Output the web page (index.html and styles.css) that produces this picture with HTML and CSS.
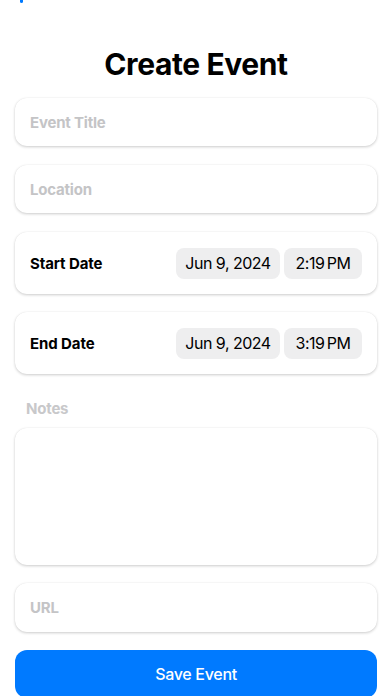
FILE: index.html
```html
<!DOCTYPE html>
<html lang="en">
<head>
<meta charset="utf-8">
<meta name="viewport" content="width=device-width, initial-scale=1">
<title>Create Event</title>
<link rel="stylesheet" href="styles.css">
</head>
<body>
<div class="navbar"><span class="back-tail"></span></div>
<main class="form">
  <h1 class="title">Create Event</h1>
  <div class="field field-first"><span class="placeholder">Event Title</span></div>
  <div class="field"><span class="placeholder">Location</span></div>
  <div class="date-row date-first">
    <span class="date-label">Start Date</span>
    <div class="pills">
      <span class="pill pill-date">Jun 9, 2024</span>
      <span class="pill pill-time">2:19&#8201;PM</span>
    </div>
  </div>
  <div class="date-row">
    <span class="date-label">End Date</span>
    <div class="pills">
      <span class="pill pill-date">Jun 9, 2024</span>
      <span class="pill pill-time">3:19&#8201;PM</span>
    </div>
  </div>
  <div class="notes-label">Notes</div>
  <div class="notes"></div>
  <div class="field field-url"><span class="placeholder">URL</span></div>
  <button class="save">Save Event</button>
</main>
</body>
</html>
```
FILE: styles.css
```css
* { box-sizing: border-box; }
html, body {
  margin: 0;
  padding: 0;
  background: #ffffff;
  font-family: Inter, "Noto Sans", "Liberation Sans", sans-serif;
  color: #000;
  overflow: hidden;
}
.navbar {
  height: 0;
  position: relative;
}
.back-tail {
  position: absolute;
  left: 20px;
  top: 0;
  width: 3px;
  height: 3px;
  background: #007aff;
  border-radius: 0 0 2px 2px;
}
.form {
  display: flex;
  flex-direction: column;
  padding: 0 15px;
}
.title {
  margin: 46px 0 0;
  height: 36px;
  line-height: 36px;
  font-size: 30px;
  font-weight: 700;
  letter-spacing: -0.4px;
  text-align: center;
}
.field {
  height: 48px;
  margin-top: 19px;
  background: #fff;
  border-radius: 12px;
  box-shadow: 0 1px 3px rgba(0,0,0,0.2), 0 0 1px rgba(0,0,0,0.08);
  display: flex;
  align-items: center;
  padding: 0 15px;
}
.field-first { margin-top: 16px; }
.placeholder {
  font-size: 15px;
  font-weight: 700;
  letter-spacing: -0.2px;
  color: #c4c4c6;
}
.date-row {
  height: 62px;
  margin-top: 19px;
  background: #fff;
  border-radius: 12px;
  box-shadow: 0 1px 3px rgba(0,0,0,0.2), 0 0 1px rgba(0,0,0,0.08);
  display: flex;
  align-items: center;
  justify-content: space-between;
  padding: 0 15px;
}
.date-row + .date-row { margin-top: 18px; }
.date-label {
  font-size: 15px;
  font-weight: 700;
  letter-spacing: -0.1px;
}
.pills {
  display: flex;
  gap: 4px;
}
.pill {
  height: 31px;
  background: #eeeeef;
  border-radius: 8px;
  display: flex;
  align-items: center;
  justify-content: center;
  font-size: 16px;
  font-weight: 400;
  letter-spacing: -0.5px;
}
.pill-date { width: 104px; }
.pill-time { width: 78px; }
.notes-label {
  margin: 25px 0 0 11px;
  height: 20px;
  line-height: 20px;
  font-size: 15px;
  font-weight: 700;
  letter-spacing: -0.2px;
  color: #c8c8ca;
}
.notes {
  margin-top: 9px;
  height: 137px;
  background: #fff;
  border-radius: 12px;
  box-shadow: 0 1px 3px rgba(0,0,0,0.2), 0 0 1px rgba(0,0,0,0.08);
}
.field-url { height: 49px; margin-top: 18px; }
.save {
  margin-top: 18px;
  height: 48px;
  border: none;
  border-radius: 12px;
  background: #007aff;
  color: #fff;
  font-family: inherit;
  font-size: 16px;
  font-weight: 500;
  letter-spacing: -0.3px;
  padding: 0;
}
```
